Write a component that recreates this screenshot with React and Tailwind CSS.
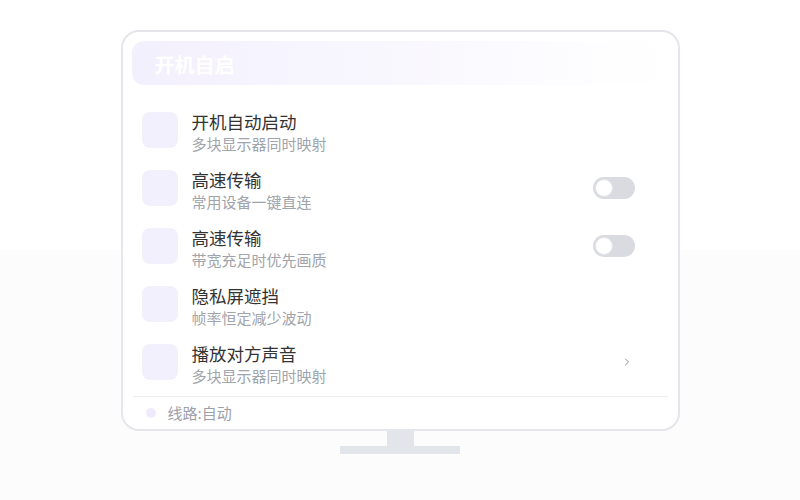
import { ChevronRight } from 'lucide-react';

const ROWS = [
  { title: '开机自动启动', sub: '多块显示器同时映射', action: null },
  { title: '高速传输', sub: '常用设备一键直连', action: 'toggle' },
  { title: '高速传输', sub: '带宽充足时优先画质', action: 'toggle' },
  { title: '隐私屏遮挡', sub: '帧率恒定减少波动', action: null },
  { title: '播放对方声音', sub: '多块显示器同时映射', action: 'chevron' },
];

function Toggle() {
  return (
    <div className="flex h-[22px] w-[42px] items-center rounded-full bg-[#d9dbe1] px-[2px]">
      <div className="h-[18px] w-[18px] rounded-full border border-[#e3e5ea] bg-white" />
    </div>
  );
}

export default function App() {
  return (
    <div
      className="flex h-[500px] w-[800px] flex-col items-center bg-gradient-to-b from-white from-50% to-[#fcfcfd] to-50% pt-[30px]"
      style={{ fontFamily: '"Noto Sans CJK SC", "Noto Sans", sans-serif' }}
    >
      {/* screen */}
      <div className="flex h-[401px] w-[559px] flex-col rounded-[18px] border-2 border-[#e4e6eb] bg-white px-[9px] pt-[9px]">
        <div className="flex h-[45px] items-center rounded-xl bg-gradient-to-r from-[#f3f0fd] to-transparent pl-[23px] pt-[5px]">
          <span className="text-[20px] font-bold leading-none text-white">开机自启</span>
        </div>

        <div className="mt-[16px] flex flex-col">
          {ROWS.map((r, i) => (
            <div key={i} className="flex h-[58px] items-center pl-[10px] pr-[34px]">
              <div className="h-[36px] w-[36px] shrink-0 rounded-lg bg-[#f3f0fd]" />
              <div className="ml-[14px] flex flex-1 flex-col pt-[6px]">
                <span className="text-[17.5px] leading-[22px] text-[#333333]">{r.title}</span>
                <span className="text-[15px] leading-[22px] text-[#a0a4ab]">{r.sub}</span>
              </div>
              {r.action === 'toggle' && <Toggle />}
              {r.action === 'chevron' && (
                <ChevronRight className="mr-[2px] h-[12px] w-[12px] text-[#8c9099]" strokeWidth={2} />
              )}
            </div>
          ))}
        </div>

        <div className="mx-[1px] mt-[5px] h-px bg-[#eceef1]" />
        <div className="flex h-[33px] items-center pl-[14px]">
          <div className="h-[10px] w-[10px] rounded-full bg-[#efebfc]" />
          <span className="ml-[12px] text-[15px] text-[#9ca0a8]">线路:自动</span>
        </div>
      </div>

      {/* stand */}
      <div className="h-[15px] w-[27px] bg-[#e2e6eb]" />
      <div className="h-[8px] w-[120px] bg-[#e2e6eb]" />
    </div>
  );
}
